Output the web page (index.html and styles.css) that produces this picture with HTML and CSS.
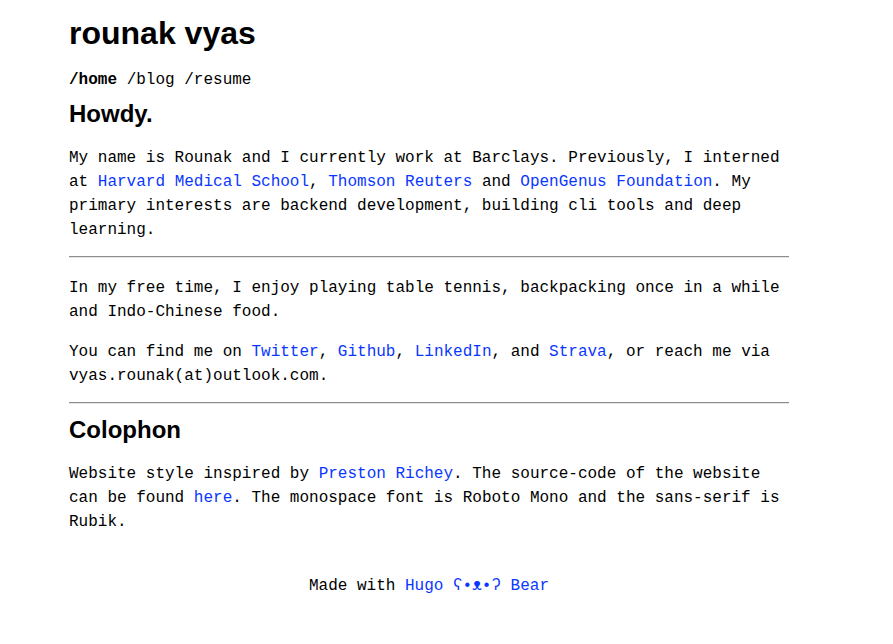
FILE: index.html
```html
<!DOCTYPE html>
<html lang="en">
<head>
<meta charset="utf-8">
<title>rounak vyas</title>
<link rel="stylesheet" href="styles.css">
</head>
<body>
<div class="page">
  <header class="site-header">
    <h1 class="title">rounak vyas</h1>
    <nav class="nav"><a class="nav-link active" href="#">/home</a> <a class="nav-link" href="#">/blog</a> <a class="nav-link" href="#">/resume</a></nav>
  </header>
  <main>
    <h2 class="heading first">Howdy.</h2>
    <p class="para">My name is Rounak and I currently work at Barclays. Previously, I interned at <a href="#">Harvard Medical School</a>, <a href="#">Thomson Reuters</a> and <a href="#">OpenGenus Foundation</a>. My primary interests are backend development, building cli tools and deep learning.</p>
    <hr class="rule">
    <p class="para">In my free time, I enjoy playing table tennis, backpacking once in a while and Indo-Chinese food.</p>
    <p class="para">You can find me on <a href="#">Twitter</a>, <a href="#">Github</a>, <a href="#">LinkedIn</a>, and <a href="#">Strava</a>, or reach me via vyas.rounak(at)outlook.com.</p>
    <hr class="rule">
    <h2 class="heading">Colophon</h2>
    <p class="para">Website style inspired by <a href="#">Preston Richey</a>. The source-code of the website can be found <a href="#">here</a>. The monospace font is Roboto Mono and the sans-serif is Rubik.</p>
  </main>
  <footer class="footer">Made with <a href="#">Hugo ʕ•ᴥ•ʔ Bear</a></footer>
</div>
</body>
</html>
```
FILE: styles.css
```css
html, body {
  margin: 0;
  padding: 0;
  background: #fff;
}
.page {
  width: 720px;
  margin: 0 0 0 69px;
  font-family: "Liberation Mono", "DejaVu Sans Mono", monospace;
  font-size: 16px;
  line-height: 24px;
  color: #000;
  padding-top: 1px;
}
a {
  color: #0a37ff;
  text-decoration: none;
}
.title {
  font-family: "Liberation Sans", Arial, sans-serif;
  font-weight: 700;
  font-size: 32px;
  line-height: 38px;
  margin: 13px 0 0;
}
.nav {
  margin-top: 16px;
  line-height: 24px;
}
.nav-link {
  color: #000;
}
.nav-link.active {
  font-weight: 700;
}
.heading {
  font-family: "Liberation Sans", Arial, sans-serif;
  font-weight: 700;
  font-size: 24px;
  line-height: 20px;
  margin: 15px 0 20px;
}
.heading.first {
  margin-top: 12px;
}
.para {
  margin: 16px 0 -2px;
  padding: 2px 0 0;
}
.rule {
  margin: 16px 0;
  border: 0;
  border-top: 1px solid #8c8c8c;
  border-bottom: 1px solid #e6e6e6;
  height: 0;
}
.footer {
  margin-top: 42px;
  text-align: center;
  padding-bottom: 40px;
}
```
